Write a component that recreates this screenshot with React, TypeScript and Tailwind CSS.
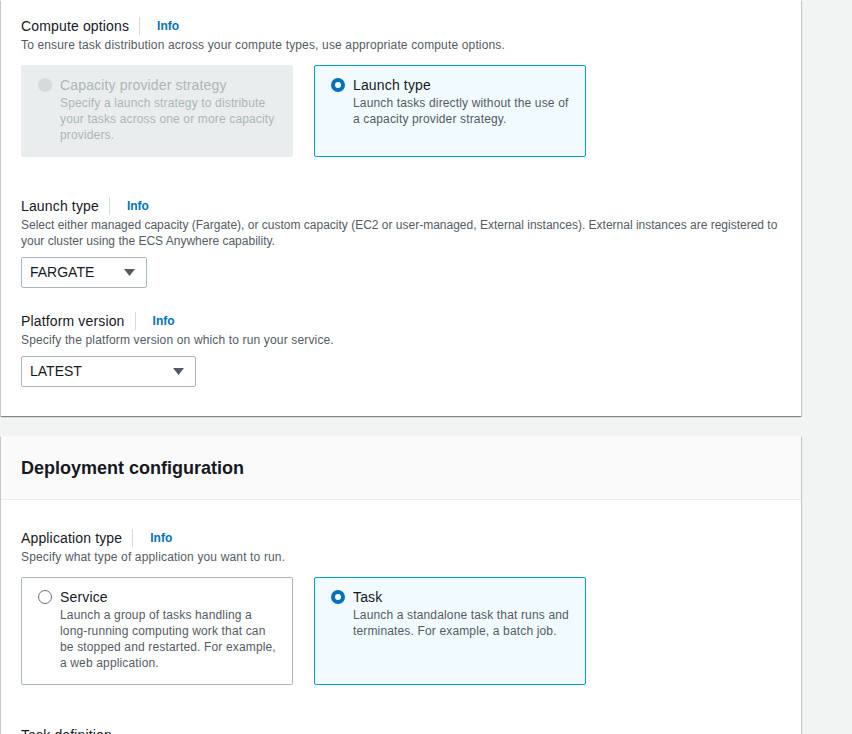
import React from "react";

const panelShadow =
  "shadow-[0_1px_1px_0_rgba(0,28,36,0.3),1px_1px_1px_0_rgba(0,28,36,0.15),-1px_1px_1px_0_rgba(0,28,36,0.15)]";

const FieldLabel: React.FC<{ label: string; info?: boolean }> = ({ label, info = true }) => (
  <div className="flex items-center h-[22px] text-[14px] leading-[22px] tracking-[0.15px] text-[#16191f]">
    <span>{label}</span>
    {info && (
      <>
        <span className="ml-[10px] h-[18px] w-px bg-[#d5dbdb]" />
        <a className="ml-[17px] text-[12px] font-bold tracking-normal text-[#0073bb]">Info</a>
      </>
    )}
  </div>
);

const Hint: React.FC<{ children: React.ReactNode; tight?: boolean }> = ({ children, tight }) => (
  <p
    className={`text-[12px] leading-[16px] text-[#545b64] ${tight ? "tracking-normal" : "tracking-[0.15px]"}`}
  >
    {children}
  </p>
);

interface TileProps {
  title: string;
  text: string;
  state: "selected" | "idle" | "disabled";
}

const Tile: React.FC<TileProps> = ({ title, text, state }) => {
  const box =
    state === "selected"
      ? "border-[#00a1c9] bg-[#f1faff]"
      : state === "disabled"
        ? "border-[#eaeded] bg-[#eaeded]"
        : "border-[#aab7b8] bg-white";
  const radio =
    state === "selected"
      ? "border-[4px] border-[#0073bb] bg-white"
      : state === "disabled"
        ? "bg-[#d5dbdb]"
        : "border border-[#687078] bg-white";
  return (
    <div className={`flex items-start border rounded-[2px] pl-4 pr-4 pt-[9px] pb-[13px] ${box}`}>
      <span className={`mt-[3px] size-[14px] shrink-0 rounded-full ${radio}`} />
      <div className="ml-2">
        <div
          className={`text-[14px] leading-[20px] tracking-[0.15px] ${state === "disabled" ? "text-[#aab7b8]" : "text-[#16191f]"}`}
        >
          {title}
        </div>
        <p
          className={`text-[12px] leading-[16px] tracking-[0.15px] ${state === "disabled" ? "text-[#aab7b8]" : "text-[#545b64]"}`}
        >
          {text}
        </p>
      </div>
    </div>
  );
};

const Select: React.FC<{ value: string; width: string }> = ({ value, width }) => (
  <div
    className={`mt-2 flex h-[31px] items-center justify-between rounded-[2px] border border-[#aab7b8] bg-white pl-2 pr-[11px] text-[14px] text-[#16191f] ${width}`}
  >
    <span>{value}</span>
    <svg width="11" height="7" viewBox="0 0 11 7">
      <path d="M0 0h11L5.5 7z" fill="#545b64" />
    </svg>
  </div>
);

export default function App() {
  return (
    <div className="h-[734px] overflow-hidden bg-[#f2f3f3] font-['Liberation_Sans',Arial,sans-serif]">
      <div className="ml-px w-[800px]">
        {/* Compute section (top cut off) */}
        <section className={`bg-white px-5 pt-[15px] pb-[29px] ${panelShadow}`}>
          <FieldLabel label="Compute options" />
          <Hint>To ensure task distribution across your compute types, use appropriate compute options.</Hint>
          <div className="mt-3 grid grid-cols-[272px_272px] gap-[21px]">
            <Tile
              state="disabled"
              title="Capacity provider strategy"
              text="Specify a launch strategy to distribute your tasks across one or more capacity providers."
            />
            <Tile
              state="selected"
              title="Launch type"
              text="Launch tasks directly without the use of a capacity provider strategy."
            />
          </div>

          <div className="mt-[38px]">
            <FieldLabel label="Launch type" />
            <Hint tight>
              Select either managed capacity (Fargate), or custom capacity (EC2 or user-managed, External instances).
              External instances are registered to your cluster using the ECS Anywhere capability.
            </Hint>
            <Select value="FARGATE" width="w-[126px]" />
          </div>

          <div className="mt-[22px]">
            <FieldLabel label="Platform version" />
            <Hint>Specify the platform version on which to run your service.</Hint>
            <Select value="LATEST" width="w-[175px]" />
          </div>
        </section>

        {/* Deployment configuration */}
        <section className={`mt-[20px] bg-white ${panelShadow}`}>
          <div className="flex h-[64px] items-center border-b border-[#eaeded] bg-[#fafafa] px-5">
            <h2 className="text-[18px] font-bold leading-[22px] text-[#16191f]">Deployment configuration</h2>
          </div>
          <div className="px-5 pt-[27px] pb-10">
            <FieldLabel label="Application type" />
            <Hint>Specify what type of application you want to run.</Hint>
            <div className="mt-3 grid grid-cols-[272px_272px] gap-[21px]">
              <Tile
                state="idle"
                title="Service"
                text="Launch a group of tasks handling a long-running computing work that can be stopped and restarted. For example, a web application."
              />
              <Tile
                state="selected"
                title="Task"
                text="Launch a standalone task that runs and terminates. For example, a batch job."
              />
            </div>
            <div className="mt-[39px]">
              <FieldLabel label="Task definition" info={false} />
            </div>
          </div>
        </section>
      </div>
    </div>
  );
}
